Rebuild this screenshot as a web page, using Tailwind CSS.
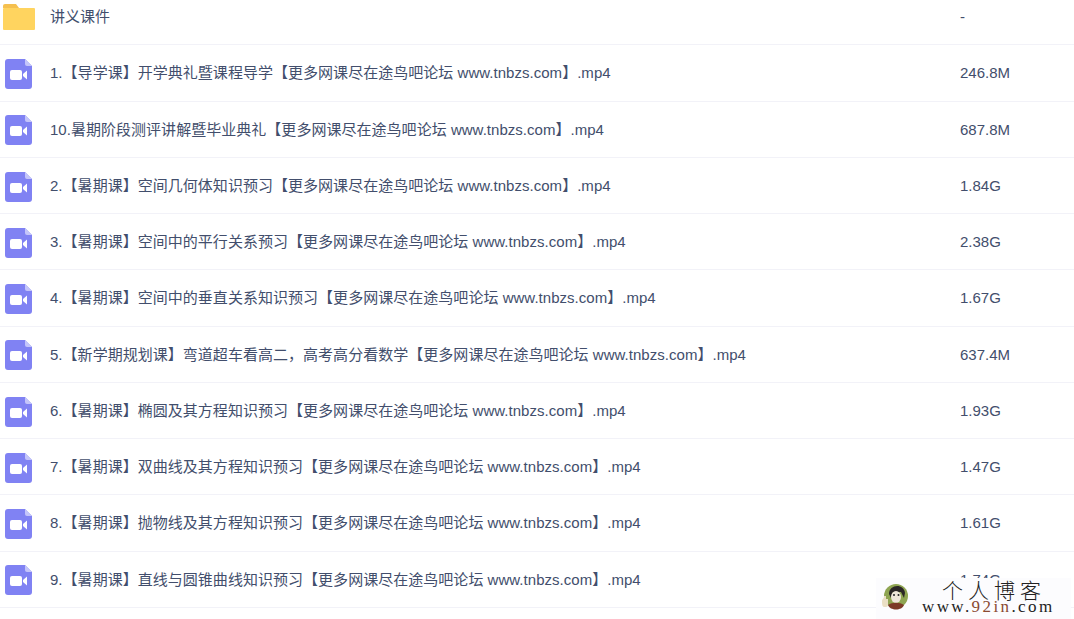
<!DOCTYPE html>
<html lang="en">
<head>
    <meta charset="UTF-8">
    <title>讲义课件</title>
    <script src="https://cdn.jsdelivr.net/npm/@tailwindcss/browser@4"></script>
</head>
<body class="bg-white overflow-hidden">
    <div class="relative w-[1074px] h-[619px] overflow-hidden font-['Liberation_Sans','Noto_Sans_CJK_SC',sans-serif] text-[15px] text-[#424e6c]">
        <!-- Folder row -->
        <div class="flex items-center h-[45.4px] border-b border-[#f2f2f8] pb-[10px]">
            <div class="w-[50px] pl-[3px]">
                <svg class="block" width="32" height="26" viewBox="0 0 32 26"><path d="M0 2a2 2 0 0 1 2-2h11l3 4H0z" fill="#f5c04f"/><path d="M0 5a1 1 0 0 1 1-1h30a1 1 0 0 1 1 1v20a1 1 0 0 1-1 1H1a1 1 0 0 1-1-1z" fill="#ffd45f"/></svg>
            </div>
            <div class="w-[910px]">讲义课件</div>
            <div>-</div>
        </div>

        <div class="flex items-center h-[56.25px] border-b border-[#f2f2f8]">
            <div class="w-[50px] pl-[5px] pt-[2px]"><svg class="block" width="27" height="30" viewBox="0 0 27 30"><path d="M3 0h17l7 7v20a3 3 0 0 1-3 3H3a3 3 0 0 1-3-3V3a3 3 0 0 1 3-3z" fill="#8082f3"/><path d="M20 0l7 7h-5a2 2 0 0 1-2-2z" fill="#c4c5fa"/><rect x="5" y="11" width="12" height="10" rx="2" fill="#fff"/><path d="M18 15l4-3.5v9L18 17z" fill="#fff"/></svg></div>
            <div class="w-[910px] pt-[1px] tracking-[0.03px]">1.【导学课】开学典礼暨课程导学【更多网课尽在途鸟吧论坛 www.tnbzs.com】.mp4</div>
            <div class="pt-[1px]">246.8M</div>
        </div>
        <div class="flex items-center h-[56.25px] border-b border-[#f2f2f8]">
            <div class="w-[50px] pl-[5px] pt-[2px]"><svg class="block" width="27" height="30" viewBox="0 0 27 30"><path d="M3 0h17l7 7v20a3 3 0 0 1-3 3H3a3 3 0 0 1-3-3V3a3 3 0 0 1 3-3z" fill="#8082f3"/><path d="M20 0l7 7h-5a2 2 0 0 1-2-2z" fill="#c4c5fa"/><rect x="5" y="11" width="12" height="10" rx="2" fill="#fff"/><path d="M18 15l4-3.5v9L18 17z" fill="#fff"/></svg></div>
            <div class="w-[910px] pt-[1px] tracking-[0.03px]">10.暑期阶段测评讲解暨毕业典礼【更多网课尽在途鸟吧论坛 www.tnbzs.com】.mp4</div>
            <div class="pt-[1px]">687.8M</div>
        </div>
        <div class="flex items-center h-[56.25px] border-b border-[#f2f2f8]">
            <div class="w-[50px] pl-[5px] pt-[2px]"><svg class="block" width="27" height="30" viewBox="0 0 27 30"><path d="M3 0h17l7 7v20a3 3 0 0 1-3 3H3a3 3 0 0 1-3-3V3a3 3 0 0 1 3-3z" fill="#8082f3"/><path d="M20 0l7 7h-5a2 2 0 0 1-2-2z" fill="#c4c5fa"/><rect x="5" y="11" width="12" height="10" rx="2" fill="#fff"/><path d="M18 15l4-3.5v9L18 17z" fill="#fff"/></svg></div>
            <div class="w-[910px] pt-[1px] tracking-[0.03px]">2.【暑期课】空间几何体知识预习【更多网课尽在途鸟吧论坛 www.tnbzs.com】.mp4</div>
            <div class="pt-[1px]">1.84G</div>
        </div>
        <div class="flex items-center h-[56.25px] border-b border-[#f2f2f8]">
            <div class="w-[50px] pl-[5px] pt-[2px]"><svg class="block" width="27" height="30" viewBox="0 0 27 30"><path d="M3 0h17l7 7v20a3 3 0 0 1-3 3H3a3 3 0 0 1-3-3V3a3 3 0 0 1 3-3z" fill="#8082f3"/><path d="M20 0l7 7h-5a2 2 0 0 1-2-2z" fill="#c4c5fa"/><rect x="5" y="11" width="12" height="10" rx="2" fill="#fff"/><path d="M18 15l4-3.5v9L18 17z" fill="#fff"/></svg></div>
            <div class="w-[910px] pt-[1px] tracking-[0.03px]">3.【暑期课】空间中的平行关系预习【更多网课尽在途鸟吧论坛 www.tnbzs.com】.mp4</div>
            <div class="pt-[1px]">2.38G</div>
        </div>
        <div class="flex items-center h-[56.25px] border-b border-[#f2f2f8]">
            <div class="w-[50px] pl-[5px] pt-[2px]"><svg class="block" width="27" height="30" viewBox="0 0 27 30"><path d="M3 0h17l7 7v20a3 3 0 0 1-3 3H3a3 3 0 0 1-3-3V3a3 3 0 0 1 3-3z" fill="#8082f3"/><path d="M20 0l7 7h-5a2 2 0 0 1-2-2z" fill="#c4c5fa"/><rect x="5" y="11" width="12" height="10" rx="2" fill="#fff"/><path d="M18 15l4-3.5v9L18 17z" fill="#fff"/></svg></div>
            <div class="w-[910px] pt-[1px] tracking-[0.03px]">4.【暑期课】空间中的垂直关系知识预习【更多网课尽在途鸟吧论坛 www.tnbzs.com】.mp4</div>
            <div class="pt-[1px]">1.67G</div>
        </div>
        <div class="flex items-center h-[56.25px] border-b border-[#f2f2f8]">
            <div class="w-[50px] pl-[5px] pt-[2px]"><svg class="block" width="27" height="30" viewBox="0 0 27 30"><path d="M3 0h17l7 7v20a3 3 0 0 1-3 3H3a3 3 0 0 1-3-3V3a3 3 0 0 1 3-3z" fill="#8082f3"/><path d="M20 0l7 7h-5a2 2 0 0 1-2-2z" fill="#c4c5fa"/><rect x="5" y="11" width="12" height="10" rx="2" fill="#fff"/><path d="M18 15l4-3.5v9L18 17z" fill="#fff"/></svg></div>
            <div class="w-[910px] pt-[1px] tracking-[0.03px]">5.【新学期规划课】弯道超车看高二，高考高分看数学【更多网课尽在途鸟吧论坛 www.tnbzs.com】.mp4</div>
            <div class="pt-[1px]">637.4M</div>
        </div>
        <div class="flex items-center h-[56.25px] border-b border-[#f2f2f8]">
            <div class="w-[50px] pl-[5px] pt-[2px]"><svg class="block" width="27" height="30" viewBox="0 0 27 30"><path d="M3 0h17l7 7v20a3 3 0 0 1-3 3H3a3 3 0 0 1-3-3V3a3 3 0 0 1 3-3z" fill="#8082f3"/><path d="M20 0l7 7h-5a2 2 0 0 1-2-2z" fill="#c4c5fa"/><rect x="5" y="11" width="12" height="10" rx="2" fill="#fff"/><path d="M18 15l4-3.5v9L18 17z" fill="#fff"/></svg></div>
            <div class="w-[910px] pt-[1px] tracking-[0.03px]">6.【暑期课】椭圆及其方程知识预习【更多网课尽在途鸟吧论坛 www.tnbzs.com】.mp4</div>
            <div class="pt-[1px]">1.93G</div>
        </div>
        <div class="flex items-center h-[56.25px] border-b border-[#f2f2f8]">
            <div class="w-[50px] pl-[5px] pt-[2px]"><svg class="block" width="27" height="30" viewBox="0 0 27 30"><path d="M3 0h17l7 7v20a3 3 0 0 1-3 3H3a3 3 0 0 1-3-3V3a3 3 0 0 1 3-3z" fill="#8082f3"/><path d="M20 0l7 7h-5a2 2 0 0 1-2-2z" fill="#c4c5fa"/><rect x="5" y="11" width="12" height="10" rx="2" fill="#fff"/><path d="M18 15l4-3.5v9L18 17z" fill="#fff"/></svg></div>
            <div class="w-[910px] pt-[1px] tracking-[0.03px]">7.【暑期课】双曲线及其方程知识预习【更多网课尽在途鸟吧论坛 www.tnbzs.com】.mp4</div>
            <div class="pt-[1px]">1.47G</div>
        </div>
        <div class="flex items-center h-[56.25px] border-b border-[#f2f2f8]">
            <div class="w-[50px] pl-[5px] pt-[2px]"><svg class="block" width="27" height="30" viewBox="0 0 27 30"><path d="M3 0h17l7 7v20a3 3 0 0 1-3 3H3a3 3 0 0 1-3-3V3a3 3 0 0 1 3-3z" fill="#8082f3"/><path d="M20 0l7 7h-5a2 2 0 0 1-2-2z" fill="#c4c5fa"/><rect x="5" y="11" width="12" height="10" rx="2" fill="#fff"/><path d="M18 15l4-3.5v9L18 17z" fill="#fff"/></svg></div>
            <div class="w-[910px] pt-[1px] tracking-[0.03px]">8.【暑期课】抛物线及其方程知识预习【更多网课尽在途鸟吧论坛 www.tnbzs.com】.mp4</div>
            <div class="pt-[1px]">1.61G</div>
        </div>
        <div class="flex items-center h-[56.25px] border-b border-[#f2f2f8]">
            <div class="w-[50px] pl-[5px] pt-[2px]"><svg class="block" width="27" height="30" viewBox="0 0 27 30"><path d="M3 0h17l7 7v20a3 3 0 0 1-3 3H3a3 3 0 0 1-3-3V3a3 3 0 0 1 3-3z" fill="#8082f3"/><path d="M20 0l7 7h-5a2 2 0 0 1-2-2z" fill="#c4c5fa"/><rect x="5" y="11" width="12" height="10" rx="2" fill="#fff"/><path d="M18 15l4-3.5v9L18 17z" fill="#fff"/></svg></div>
            <div class="w-[910px] pt-[1px] tracking-[0.03px]">9.【暑期课】直线与圆锥曲线知识预习【更多网课尽在途鸟吧论坛 www.tnbzs.com】.mp4</div>
            <div class="pt-[1px]">1.74G</div>
        </div>

        <!-- Watermark -->
        <div class="absolute left-[876px] top-[578px] w-[195px] h-[41px] bg-[#fcfcfe] flex items-start pl-[5px] pt-[4px]">
            <svg width="28" height="30" viewBox="0 0 28 30" class="shrink-0">
                <circle cx="15" cy="14" r="12" fill="#8fa552"/>
                <path d="M8 12c0-10 15-11 16-1l-1 5-3-6h-8l-2 6z" fill="#2b2626"/>
                <ellipse cx="15" cy="15" rx="5" ry="6" fill="#efe6da"/>
                <circle cx="13" cy="13" r="1" fill="#222"/><circle cx="17.5" cy="13" r="1" fill="#222"/>
                <path d="M7 23c4-3 12-3 16 0-2 6-14 6-16 0z" fill="#7c3a26"/>
                <path d="M1 19c0-2 2-2 2-5h2v3h2v6a2 2 0 0 1-2 2H3c-2 0-2-4-2-6z" fill="#eadfc4"/>
            </svg>
            <div class="ml-[13px] -mt-[3px] text-[#222]">
                <div class="ml-[20px] text-[21px] leading-[21px] tracking-[5px] whitespace-nowrap font-['Noto_Sans_CJK_SC',sans-serif] font-light">个人博客</div>
                <div class="text-[17px] leading-[14px] tracking-[2.4px] font-['Liberation_Serif',serif] whitespace-nowrap">www.<span class="text-[#8a4a32]">92in</span>.com</div>
            </div>
        </div>
    </div>
</body>
</html>
